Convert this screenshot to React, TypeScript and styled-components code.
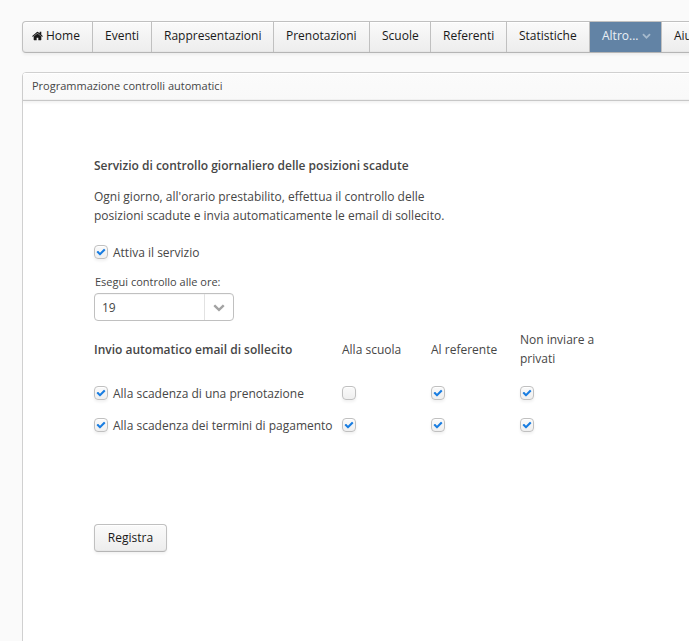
import React from "react";
import styled, { createGlobalStyle, css } from "styled-components";

const GlobalStyle = createGlobalStyle`
  *, *::before, *::after { box-sizing: border-box; }
  html, body { margin: 0; height: 100%; overflow: hidden; background: #fafafa; }
  body { font-family: "Open Sans", sans-serif; font-size: 12px; line-height: 19px; color: #464646; }
`;

const Page = styled.div`
  display: flex;
  flex-direction: column;
  gap: 19px;
  height: 641px;
  padding: 21px 0 0 22px;
  overflow: hidden;
`;

const MenuBar = styled.nav`
  display: flex;
  flex: none;
  width: 760px;
  height: 32px;
  border: 1px solid #c0c0c0;
  border-bottom-color: #b5b5b5;
  border-radius: 4px;
  background: linear-gradient(to bottom, #fafafa 2%, #ededed 98%);
  box-shadow: inset 0 1px 0 #fff, inset 0 -1px 0 #e7e7e7, 0 2px 3px rgba(0, 0, 0, 0.05);
  color: #191919;
`;

const MenuItem = styled.div<{ $width: number; $active?: boolean }>`
  display: flex;
  align-items: center;
  flex: none;
  width: ${(p) => p.$width}px;
  height: 30px;
  padding: 0 0 3px 12px;
  border-right: 1px solid #c0c0c0;
  white-space: nowrap;
  ${(p) =>
    p.$active &&
    css`
      background: #6283a5;
      color: #eaf0f6;
    `}
`;

const Panel = styled.section`
  display: flex;
  flex-direction: column;
  flex: none;
  width: 760px;
  height: 640px;
  border: 1px solid #d0d0d0;
  border-radius: 4px;
  background: #fff;
`;

const PanelCaption = styled.header`
  flex: none;
  height: 28px;
  padding: 3px 9px 0;
  border-bottom: 1px solid #c7c7c7;
  border-radius: 3px 3px 0 0;
  background: linear-gradient(to bottom, #fbfbfb, #f9f9f9);
  box-shadow: inset 0 1px 0 #fff, inset 0 -1px 0 #f1f1f1, 0 2px 3px rgba(0, 0, 0, 0.05);
  font-size: 11px;
`;

const Content = styled.div`
  display: flex;
  flex-direction: column;
  align-items: flex-start;
  padding: 55px 0 0 71px;
`;

const Heading = styled.h2`
  margin: 0;
  font-size: 12px;
  font-weight: 600;
  line-height: 19px;
`;

const Description = styled.p`
  width: 360px;
  margin: 12px 0 18px;
`;

const Option = styled.label`
  display: flex;
  align-items: center;
  gap: 5px;
  height: 19px;
  white-space: nowrap;
`;

const Box = styled.span`
  display: flex;
  align-items: center;
  justify-content: center;
  flex: none;
  width: 14px;
  height: 14px;
  margin-bottom: 1px;
  border: 1px solid #c0c0c0;
  border-radius: 4px;
  background: linear-gradient(to bottom, #fafafa, #efefef);
  box-shadow: inset 0 1px 0 #fff, 0 2px 3px rgba(0, 0, 0, 0.06);
  color: #197de1;
`;

const FieldLabel = styled.span`
  margin: 11px 0 0 1px;
  font-size: 11px;
  line-height: 17px;
`;

const Select = styled.div`
  display: flex;
  width: 140px;
  height: 28px;
  margin: 3px 0 6px;
  border: 1px solid #c0c0c0;
  border-radius: 4px;
  background: #fff;
  box-shadow: inset 0 1px 0 #f7f7f7;
`;

const SelectValue = styled.span`
  width: 109px;
  padding: 4px 7px;
`;

const SelectArrow = styled.span`
  display: flex;
  flex: 1;
  align-items: center;
  justify-content: center;
  border-left: 1px solid #e2e2e2;
  color: #a3a3a3;
`;

const ReminderGrid = styled.div`
  display: grid;
  grid-template-columns: 248px 89px 89px 89px;
  grid-template-rows: 44px 19px 19px;
  row-gap: 13px;
  align-items: center;
  margin-bottom: 89px;
`;

const HeaderCell = styled.div`
  padding-right: 8px;
`;

const Button = styled.button`
  width: 73px;
  height: 28px;
  padding: 0 0 1px;
  border: 1px solid #c0c0c0;
  border-bottom-color: #b5b5b5;
  border-radius: 4px;
  background: linear-gradient(to bottom, #fafafa 2%, #ededed 98%);
  box-shadow: inset 0 1px 0 #fff, inset 0 -1px 0 #e7e7e7, 0 2px 3px rgba(0, 0, 0, 0.05);
  color: #191919;
  font: 12px/19px "Open Sans", sans-serif;
`;

const HomeGlyph = styled.svg`
  flex: none;
  width: 11px;
  height: 12px;
  margin: 1px 3px 0 -3px;
`;

const MenuChevron = styled.svg`
  flex: none;
  margin: 0 0 1px 4px;
  color: #a6bacd;
`;

const HomeIcon = () => (
  <HomeGlyph viewBox="0 0 1664 1792" fill="currentColor">
    <path d="M1408 992v480q0 26-19 45t-45 19h-384v-384h-256v384h-384q-26 0-45-19t-19-45v-480q0-1 .5-3t.5-3l575-474 575 474q1 2 1 6zm223-69l-62 74q-8 9-21 11h-3q-13 0-21-7l-692-577-692 577q-12 8-24 7-13-2-21-11l-62-74q-8-10-7-23.5t11-21.5l719-599q32-26 76-26t76 26l244 204v-195q0-14 9-23t23-9h192q14 0 23 9t9 23v408l219 182q10 8 11 21.5t-7 23.5z" />
  </HomeGlyph>
);

const chevronPath =
  "M1683 808l-742 741q-19 19-45 19t-45-19l-742-741q-19-19-19-45.5t19-45.5l166-165q19-19 45-19t45 19l531 531 531-531q19-19 45-19t45 19l166 165q19 19 19 45.5t-19 45.5z";

const Checkbox = ({ checked }: { checked: boolean }) => (
  <Box role="checkbox" aria-checked={checked}>
    {checked && (
      <svg width="10" height="10" viewBox="0 0 1792 1792" fill="currentColor">
        <path d="M1671 566q0 40-28 68l-724 724-136 136q-28 28-68 28t-68-28l-136-136-362-362q-28-28-28-68t28-68l136-136q28-28 68-28t68 28l294 295 656-657q28-28 68-28t68 28l136 136q28 28 28 68z" />
      </svg>
    )}
  </Box>
);

const menu = [
  { label: "Home", width: 70, home: true },
  { label: "Eventi", width: 59 },
  { label: "Rappresentazioni", width: 122 },
  { label: "Prenotazioni", width: 96 },
  { label: "Scuole", width: 61 },
  { label: "Referenti", width: 76 },
  { label: "Statistiche", width: 83 },
  { label: "Altro...", width: 72, active: true },
  { label: "Aiuto", width: 60 },
];

const reminders = [
  { label: "Alla scadenza di una prenotazione", targets: [false, true, true] },
  { label: "Alla scadenza dei termini di pagamento", targets: [true, true, true] },
];

export default function App() {
  return (
    <>
      <GlobalStyle />
      <Page>
        <MenuBar>
          {menu.map((item) => (
            <MenuItem key={item.label} $width={item.width} $active={item.active}>
              {item.home && <HomeIcon />}
              {item.label}
              {item.active && (
                <MenuChevron width="9" height="9" viewBox="0 0 1792 1792" fill="currentColor">
                  <path d={chevronPath} />
                </MenuChevron>
              )}
            </MenuItem>
          ))}
        </MenuBar>
        <Panel>
          <PanelCaption>Programmazione controlli automatici</PanelCaption>
          <Content>
            <Heading>Servizio di controllo giornaliero delle posizioni scadute</Heading>
            <Description>
              Ogni giorno, all'orario prestabilito, effettua il controllo delle
              <br />
              posizioni scadute e invia automaticamente le email di sollecito.
            </Description>
            <Option>
              <Checkbox checked />
              Attiva il servizio
            </Option>
            <FieldLabel>Esegui controllo alle ore:</FieldLabel>
            <Select>
              <SelectValue>19</SelectValue>
              <SelectArrow>
                <svg width="12" height="12" viewBox="0 0 1792 1792" fill="currentColor">
                  <path d={chevronPath} />
                </svg>
              </SelectArrow>
            </Select>
            <ReminderGrid>
              <Heading>Invio automatico email di sollecito</Heading>
              <HeaderCell>Alla scuola</HeaderCell>
              <HeaderCell>Al referente</HeaderCell>
              <HeaderCell>Non inviare a privati</HeaderCell>
              {reminders.map((row) => (
                <React.Fragment key={row.label}>
                  <Option>
                    <Checkbox checked />
                    {row.label}
                  </Option>
                  {row.targets.map((checked, i) => (
                    <Checkbox key={i} checked={checked} />
                  ))}
                </React.Fragment>
              ))}
            </ReminderGrid>
            <Button>Registra</Button>
          </Content>
        </Panel>
      </Page>
    </>
  );
}
